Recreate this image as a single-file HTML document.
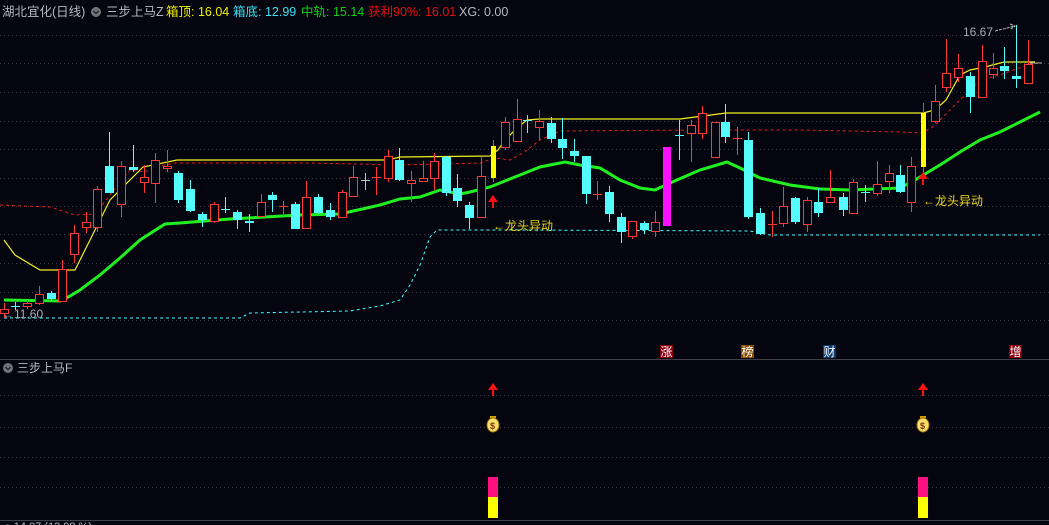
<!DOCTYPE html>
<html><head><meta charset="utf-8"><style>
html,body{margin:0;padding:0;background:#05050f;width:1049px;height:525px;overflow:hidden}
svg{display:block}
text{font-family:"Liberation Sans","Noto Sans CJK SC",sans-serif}
</style></head><body>
<svg id="s" width="1049" height="525" xmlns="http://www.w3.org/2000/svg">
<rect width="1049" height="525" fill="#05050f"/>
<g id="grid" stroke="#3a3a44" stroke-width="1" stroke-dasharray="1,3"></g>
<line x1="0" y1="359.5" x2="1049" y2="359.5" stroke="#404048"/>
<line x1="0" y1="520.5" x2="1049" y2="520.5" stroke="#404048"/>
<!-- lines -->
<polyline fill="none" stroke="#40ffff" stroke-width="1" stroke-dasharray="3,3" points="4,318 240,318 250,313 350,311 380,306 400,300 410,285 420,265 430,237 437,230 520,230 750,231 770,235 1040,235"/>
<polyline fill="none" stroke="#e02020" stroke-width="1" stroke-dasharray="3,3" points="0,205 50,207 75,215 95,214 110,195 130,170 145,172 155,167 175,163 310,163 400,165 440,164 480,163 495,158 510,160 523,153 540,140 560,131 700,130 800,130 900,132 923,133 935,125 950,110 965,95 980,80 1000,75 1030,64 1040,63"/>
<polyline fill="none" stroke="#f0f020" stroke-width="1.2" points="4,240 15,255 40,270 75,270 110,200 143,167 177,160 388,160 400,157 490,156 498,150 505,140 517,128 527,120 540,119 680,119 726,113 923,113 935,110 946,100 960,75 970,70 985,67 1004,62 1035,62"/>
<line x1="1030" y1="63" x2="1042" y2="63" stroke="#aaa"/>
<polyline fill="none" stroke="#20f020" stroke-width="3" points="4,300 60,301 70,296 80,290 100,275 120,258 140,240 165,224 180,223 230,219 300,215 340,214 380,205 400,199 420,197 440,190 460,194 470,192 490,187 520,175 540,167 565,162 580,165 600,168 620,180 640,188 655,190 670,183 700,170 727,162 740,168 760,178 790,185 820,189 850,190 900,188 915,180 940,165 960,152 980,140 1000,132 1020,122 1040,112"/>
<g id="c"></g>
<!-- arrows main -->
<g fill="#ff1010">
<rect x="492" y="201" width="2" height="7"/><polygon points="488,202 493,195 498,202"/>
<rect x="922" y="178" width="2" height="7"/><polygon points="918,179 923,172 928,179"/>
</g>
<text x="493" y="230" font-size="12" fill="#e8d820">←龙头异动</text>
<text x="923" y="205" font-size="12" fill="#e8d820">←龙头异动</text>
<text x="2" y="318" font-size="12" fill="#a8a8b0">←11.60</text>
<text x="963" y="36" font-size="12" fill="#a8a8b0">16.67</text>
<path d="M995,31 L1015,26 M1010,24 L1015,26 L1011,29" stroke="#bbb" fill="none" stroke-dasharray="3,1"/>
<!-- header -->
<text y="16" font-size="12.5">
<tspan x="2" fill="#b8b8c0">湖北宜化(日线)</tspan>
</text>
<circle cx="96" cy="12" r="5" fill="#707078"/><path d="M93.5,11 L96,13.5 L98.5,11" stroke="#111" fill="none"/>
<text y="16" font-size="12.5"><tspan x="106" fill="#b8b8c0">三步上马Z</tspan>
<tspan x="166" fill="#f0f000">箱顶: 16.04</tspan>
<tspan x="233" fill="#40e0f0">箱底: 12.99</tspan>
<tspan x="301" fill="#10d010">中轨: 15.14</tspan>
<tspan x="368" fill="#e01010">获利90%: 16.01</tspan>
<tspan x="459" fill="#b8b8c0">XG: 0.00</tspan></text>
<!-- badges -->
<rect x="660" y="345" width="13" height="13" fill="#8a0010"/><text x="660.5" y="356" font-size="12" fill="#fff">涨</text>
<rect x="741" y="345" width="13" height="13" fill="#8a4a00"/><text x="741.5" y="356" font-size="12" fill="#fff">榜</text>
<rect x="823" y="345" width="13" height="13" fill="#0a3a70"/><text x="823.5" y="356" font-size="12" fill="#fff">财</text>
<rect x="1009" y="345" width="13" height="13" fill="#8a0010"/><text x="1009.5" y="356" font-size="12" fill="#fff">增</text>
<!-- lower panel -->
<circle cx="8" cy="368" r="5" fill="#707078"/><path d="M5.5,367 L8,369.5 L10.5,367" stroke="#111" fill="none"/>
<text x="17" y="372" font-size="12" fill="#b8b8c0">三步上马F</text>
<g fill="#ff1010">
<rect x="492" y="388" width="2" height="8"/><polygon points="488,390 493,383 498,390"/>
<rect x="922" y="388" width="2" height="8"/><polygon points="918,390 923,383 928,390"/>
</g>
<g id="bags"></g>
<rect x="488" y="477" width="10" height="20" fill="#ff1080"/><rect x="488" y="497" width="10" height="21" fill="#ffff00"/>
<rect x="918" y="477" width="10" height="20" fill="#ff1080"/><rect x="918" y="497" width="10" height="21" fill="#ffff00"/>
<text x="4" y="530" font-size="11" fill="#b8b8c0">● 14.07 (12.98 %) </text>
</svg>
<script>
var NS="http://www.w3.org/2000/svg";
function el(p,t,a){var e=document.createElementNS(NS,t);for(var k in a)e.setAttribute(k,a[k]);p.appendChild(e);return e;}
var g=document.getElementById('grid');
[35,63,92,121,149,178,206,234,263,292,320,395,427,457,487].forEach(function(y){el(g,'line',{x1:0,x2:1049,y1:y+.5,y2:y+.5});});
var C={r:"#ff3838",c:"#54fcfc",y:"#ffff00",m:"#ff10ff",w:"#c0c0c0"};
var d=[[4,309,313,303,318,'r'],[15,306,306,302,310,'c'],[27,303,306,300,309,'r'],[39,294,303,286,305,'r'],[51,293,299,291,301,'c'],[62,269,301,260,302,'r'],[74,233,254,225,263,'r'],[86,222,227,212,233,'r'],[97,189,227,186,232,'r'],[109,166,193,132,193,'c'],[121,166,204,161,217,'r'],[133,167,170,145,172,'c'],[144,177,182,165,193,'r'],[155,160,183,153,203,'r'],[167,166,168,150,172,'r'],[178,173,200,171,203,'c'],[190,189,211,180,212,'c'],[202,214,220,212,227,'c'],[214,204,221,202,223,'r'],[225,209,209,197,213,'c'],[237,212,220,210,229,'c'],[249,221,223,214,232,'c'],[261,202,216,194,218,'r'],[272,195,200,192,212,'c'],[283,206,206,201,216,'r'],[295,204,229,202,229,'c'],[306,197,228,181,229,'r'],[318,197,213,194,214,'c'],[330,210,217,203,220,'c'],[342,192,217,190,218,'r'],[353,177,196,166,197,'r'],[365,180,180,173,190,'w'],[376,177,177,167,195,'r'],[388,156,178,150,182,'r'],[399,160,180,148,181,'c'],[411,180,183,171,202,'r'],[423,178,181,161,182,'r'],[434,161,178,153,190,'r'],[446,157,193,156,196,'c'],[457,188,201,174,207,'c'],[469,205,218,202,229,'c'],[481,176,217,157,217,'r'],[505,122,147,117,150,'r'],[517,119,141,99,142,'r'],[527,120,121,115,133,'c'],[539,121,127,110,140,'r'],[551,123,139,117,143,'c'],[562,139,148,118,159,'c'],[574,151,156,139,162,'c'],[586,156,194,156,204,'c'],[597,194,194,181,200,'r'],[609,192,214,186,222,'c'],[621,217,232,213,243,'c'],[632,221,236,221,239,'r'],[644,223,230,221,234,'c'],[655,222,231,211,237,'r'],[679,135,135,120,160,'c'],[691,125,133,120,162,'r'],[702,113,133,106,139,'r'],[715,122,157,122,157,'r'],[725,122,137,104,143,'c'],[737,138,138,127,155,'r'],[748,140,217,132,219,'c'],[760,213,234,208,235,'c'],[772,224,224,211,237,'r'],[783,206,223,187,227,'r'],[795,198,222,197,224,'c'],[807,200,224,197,232,'r'],[818,202,213,188,217,'c'],[830,197,202,170,202,'r'],[843,197,210,193,216,'c'],[853,182,213,179,213,'r'],[865,192,192,185,202,'c'],[877,184,193,161,196,'r'],[889,173,181,165,193,'r'],[900,175,192,165,193,'c'],[911,166,202,157,212,'r'],[935,101,121,85,123,'r'],[946,73,87,39,92,'r'],[958,68,77,54,82,'r'],[970,76,97,72,113,'c'],[982,61,97,45,97,'r'],[993,68,74,53,79,'r'],[1004,66,71,47,79,'c'],[1016,76,79,25,88,'c'],[1028,64,83,40,83,'r']];
var c=document.getElementById('c');
d.forEach(function(k){var x=k[0],col=C[k[5]];
el(c,'line',{x1:x+.5,x2:x+.5,y1:k[3],y2:k[4],stroke:col});
if(k[2]-k[1]<1){el(c,'line',{x1:x-4,x2:x+5,y1:k[1]+.5,y2:k[1]+.5,stroke:col});}
else if(k[5]=='r'){el(c,'rect',{x:x-4+.5,y:k[1]+.5,width:8,height:k[2]-k[1],fill:'#05050f',stroke:col});}
else el(c,'rect',{x:x-4,y:k[1],width:9,height:k[2]-k[1],fill:col});});
// yellow dragon candles
[[493,146,178,140,182],[923,113,167,103,177]].forEach(function(k){el(c,'line',{x1:k[0]+.5,x2:k[0]+.5,y1:k[3],y2:k[4],stroke:'#ff3838'});el(c,'rect',{x:k[0]-2,y:k[1],width:5,height:k[2]-k[1],fill:'#ffff00'});});
// magenta bar
el(c,'rect',{x:663,y:147,width:8,height:79,fill:'#ff10ff'});
var b=document.getElementById('bags');
[493,923].forEach(function(x){el(b,'rect',{x:x-3,y:416,width:6,height:3,fill:'#d0a000'});
el(b,'ellipse',{cx:x,cy:425,rx:6,ry:7,fill:'#f8e070',stroke:'#a07000'});
var t=el(b,'text',{x:x-3,y:429,'font-size':9,fill:'#803000','font-weight':'bold'});t.textContent='$';});
</script>
</body></html>
